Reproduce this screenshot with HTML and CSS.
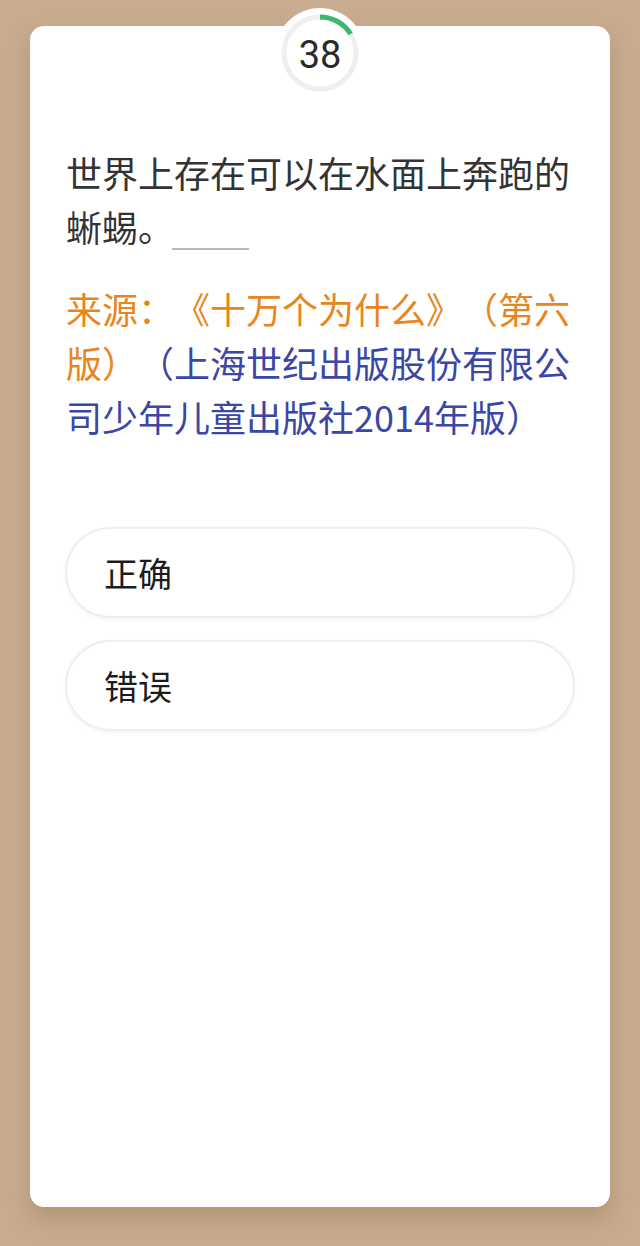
FILE: index.html
```html
<!DOCTYPE html>
<html lang="zh-CN">
<head>
    <meta charset="UTF-8">
    <meta name="viewport" content="width=device-width, initial-scale=1.0">
    <title>答题</title>
    <link rel="stylesheet" href="styles.css">
</head>
<body>
    <div class="quiz-card">
        <!-- Countdown badge -->
        <div class="timer">
            <svg class="timer-ring" viewBox="0 0 90 90" width="90" height="90">
                <circle cx="45" cy="45" r="36" fill="none" stroke="#efefef" stroke-width="5"/>
                <circle cx="45" cy="45" r="36" fill="none" stroke="#3cb96e" stroke-width="5"
                        stroke-dasharray="36.5 200" transform="rotate(-90 45 45)"/>
            </svg>
            <span class="timer-num">38</span>
        </div>

        <div class="question">
            世界上存在可以在水面上奔跑的蜥蜴。<span class="blank"></span>
        </div>

        <div class="source">
            <span class="source-title">来源：《十万个为什么》（第六版）</span><span class="source-pub">（上海世纪出版股份有限公司少年儿童出版社2014年版）</span>
        </div>

        <div class="options">
            <button class="option-btn">正确</button>
            <button class="option-btn">错误</button>
        </div>
    </div>
</body>
</html>
```

FILE: styles.css
```css
* {
    margin: 0;
    padding: 0;
    box-sizing: border-box;
}

body {
    font-family: "Noto Sans CJK SC", "Noto Sans", sans-serif;
    background: #c9ab8f;
    min-height: 100vh;
    padding: 26px 30px 39px;
}

/* Card */
.quiz-card {
    position: relative;
    background: white;
    border-radius: 14px;
    height: 1181px;
    padding: 119px 34px 0 36px;
    box-shadow: 0 12px 22px rgba(120, 88, 55, 0.28);
    text-spacing-trim: space-all;
}

/* Timer */
.timer {
    position: absolute;
    top: -18px;
    left: 50%;
    transform: translateX(-50%);
    width: 90px;
    height: 90px;
    border-radius: 50%;
    background: white;
    display: flex;
    align-items: center;
    justify-content: center;
}

.timer-ring {
    position: absolute;
    top: 0;
    left: 0;
}

.timer-num {
    font-family: Roboto, "Noto Sans", sans-serif;
    font-size: 38px;
    color: #2a2a2a;
    line-height: 1;
    margin-top: 4px;
}

/* Question */
.question {
    font-size: 36px;
    line-height: 54px;
    color: #333;
}

.blank {
    display: inline-block;
    width: 77px;
    height: 2px;
    background: #b9b9b9;
    vertical-align: -8px;
    margin-left: -2px;
}

.source {
    margin-top: 28px;
    font-size: 36px;
    line-height: 54px;
}

.source-title {
    color: #e8861c;
}

.source-pub {
    color: #3b46a6;
}

/* Options */
.options {
    margin-top: 84px;
    display: flex;
    flex-direction: column;
    gap: 22px;
    margin-left: -1px;
    margin-right: 1px;
}

.option-btn {
    height: 91px;
    border-radius: 46px;
    border: 2px solid #efefef;
    background: #fff;
    box-shadow: 0 2px 4px rgba(0, 0, 0, 0.04);
    text-align: left;
    padding-left: 37px;
    font-family: "Noto Sans CJK SC", sans-serif;
    font-size: 34px;
    color: #1c1c1c;
}
```
